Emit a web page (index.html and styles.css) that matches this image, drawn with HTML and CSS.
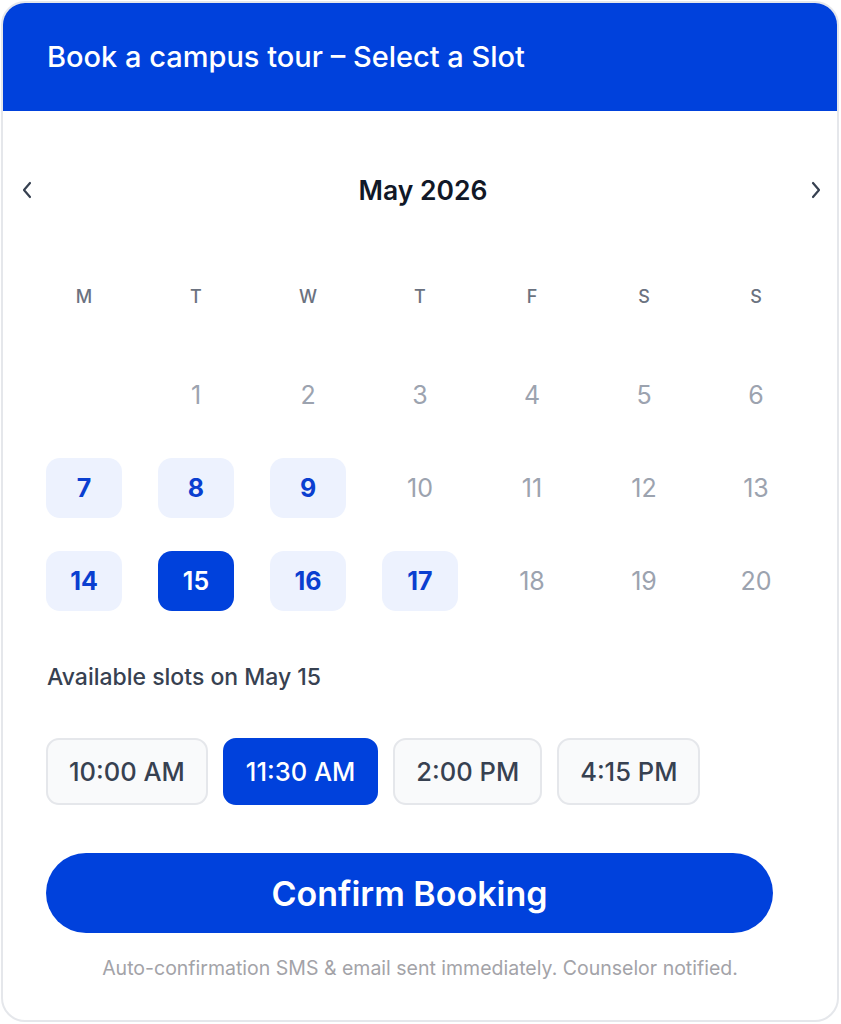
FILE: index.html
```html
<!DOCTYPE html>
<html lang="en">
<head>
    <meta charset="UTF-8">
    <meta name="viewport" content="width=device-width, initial-scale=1.0">
    <title>Book a campus tour</title>
    <link rel="stylesheet" href="styles.css">
</head>
<body>

<div class="card">
    <!-- Cabeçalho -->
    <div class="card-header">
        <h1>Book a campus tour – Select a Slot</h1>
    </div>

    <!-- Navegação do mês -->
    <div class="cal-nav">
        <button class="nav-btn" aria-label="Previous month">
            <svg width="12" height="18" viewBox="0 0 12 18"><path d="M9 2 L3 9 L9 16" fill="none" stroke="#374151" stroke-width="2.2" stroke-linecap="round" stroke-linejoin="round"/></svg>
        </button>
        <span class="month">May 2026</span>
        <button class="nav-btn" aria-label="Next month">
            <svg width="12" height="18" viewBox="0 0 12 18"><path d="M3 2 L9 9 L3 16" fill="none" stroke="#374151" stroke-width="2.2" stroke-linecap="round" stroke-linejoin="round"/></svg>
        </button>
    </div>

    <div class="weekdays">
        <span>M</span><span>T</span><span>W</span><span>T</span><span>F</span><span>S</span><span>S</span>
    </div>

    <div class="days">
        <span class="day"></span>
        <span class="day">1</span>
        <span class="day">2</span>
        <span class="day">3</span>
        <span class="day">4</span>
        <span class="day">5</span>
        <span class="day">6</span>

        <span class="day open">7</span>
        <span class="day open">8</span>
        <span class="day open">9</span>
        <span class="day">10</span>
        <span class="day">11</span>
        <span class="day">12</span>
        <span class="day">13</span>

        <span class="day open">14</span>
        <span class="day open selected">15</span>
        <span class="day open">16</span>
        <span class="day open">17</span>
        <span class="day">18</span>
        <span class="day">19</span>
        <span class="day">20</span>
    </div>

    <div class="slots-label">Available slots on May 15</div>

    <div class="slots">
        <button class="slot">10:00 AM</button>
        <button class="slot selected">11:30 AM</button>
        <button class="slot">2:00 PM</button>
        <button class="slot">4:15 PM</button>
    </div>

    <button class="confirm">Confirm Booking</button>

    <p class="note">Auto-confirmation SMS &amp; email sent immediately. Counselor notified.</p>
</div>

</body>
</html>
```

FILE: styles.css
```css
body {
    font-family: Inter, "Noto Sans", sans-serif;
    background-color: #ffffff;
    margin: 0;
    padding: 1px;
}

.card {
    width: 838px;
    height: 1021px;
    box-sizing: border-box;
    border: 2px solid #e5e7eb;
    border-radius: 24px;
    overflow: hidden;
    background-color: white;
}

.card-header {
    background-color: #0041dc;
    height: 108px;
    display: flex;
    align-items: center;
    padding-left: 44px;
}

.card-header h1 {
    margin: 0 0 2px 0;
    color: white;
    font-size: 29px;
    font-weight: 500;
}

.cal-nav {
    margin-top: 60px;
    height: 38px;
    display: flex;
    justify-content: space-between;
    align-items: center;
    padding: 0 13px 0 16px;
}

.nav-btn {
    background: none;
    border: none;
    padding: 0;
    width: 16px;
    height: 20px;
    display: flex;
    align-items: center;
    justify-content: center;
    cursor: pointer;
}

.month {
    font-size: 26.5px;
    font-weight: 600;
    color: #111827;
    margin-left: 3px;
}

.weekdays, .days {
    display: grid;
    grid-template-columns: repeat(7, 76px);
    column-gap: 36px;
    margin: 0 43px;
}

.weekdays {
    margin-top: 67px;
}

.weekdays span {
    height: 40px;
    display: flex;
    align-items: center;
    justify-content: center;
    font-size: 18px;
    font-weight: 500;
    color: #6b7280;
}

.days {
    margin-top: 49px;
    grid-auto-rows: 60px;
    row-gap: 33px;
}

.day {
    display: flex;
    align-items: center;
    justify-content: center;
    font-size: 25px;
    color: #9ca3af;
    border-radius: 14px;
}

.day.open {
    background-color: #edf2fe;
    color: #0a3fd0;
    font-weight: 700;
}

.day.selected {
    background-color: #0041dc;
    color: white;
    font-weight: 600;
}

.slots-label {
    margin: 51px 44px 0 44px;
    font-size: 23px;
    line-height: 30px;
    font-weight: 500;
    color: #374151;
}

.slots {
    margin: 46px 44px 0 43px;
    display: flex;
    gap: 15px;
}

.slot {
    height: 67px;
    padding: 0 21px;
    background-color: #f9fafb;
    border: 2px solid #e5e7eb;
    border-radius: 13px;
    font-family: Inter, "Noto Sans", sans-serif;
    font-size: 25.5px;
    font-weight: 500;
    color: #374151;
    cursor: pointer;
}

.slot.selected {
    background-color: #0041dc;
    border-color: #0041dc;
    color: white;
}

.confirm {
    display: block;
    margin: 48px 0 0 43px;
    width: 727px;
    height: 80px;
    border: none;
    border-radius: 40px;
    background-color: #0041dc;
    color: white;
    font-family: Inter, "Noto Sans", sans-serif;
    font-size: 34px;
    font-weight: 600;
    cursor: pointer;
}

.note {
    margin: 21px 0 0 0;
    text-align: center;
    font-size: 19.5px;
    line-height: 28px;
    color: #a3a3a8;
}
```
